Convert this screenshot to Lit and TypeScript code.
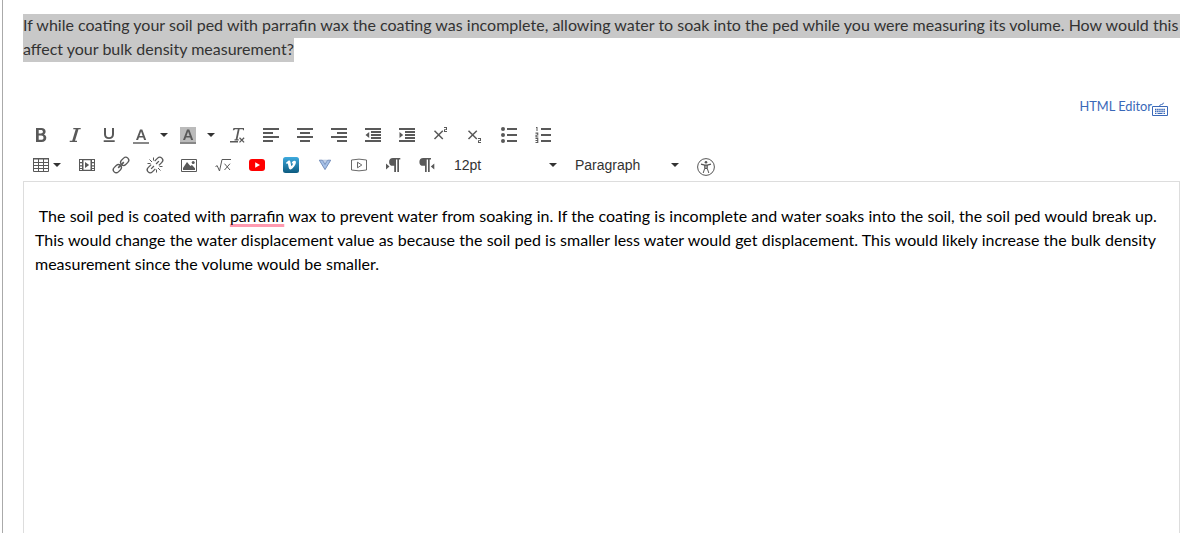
import { LitElement, html, css, svg, nothing } from "lit";
import type { TemplateResult, SVGTemplateResult } from "lit";
import { customElement, property } from "lit/decorators.js";

// All glyphs live on a 16x16 grid, painted with currentColor
const ICONS: Record<string, SVGTemplateResult> = {
    bold: svg`<path fill-rule="evenodd" d="M3 1h5.400c2.700 0 4.200 1.300 4.200 3.600 0 1.300-.6 2.300-1.700 2.900 1.500.5 2.400 1.700 2.400 3.300 0 2.600-1.700 4.200-4.700 4.200H3zM5.700 3.100v3.400h2.100c1.400 0 2.100-.6 2.100-1.700s-.7-1.700-2-1.700zM5.700 8.600v4.200h2.500c1.500 0 2.300-.7 2.300-2.100 0-1.400-.8-2.100-2.400-2.100z"/>`,
    italic: svg`<path d="M6.300 1h7.400v1.300h-2.200L8 13.700h2V15H2.700v-1.300h2.500L8.700 2.300H6.300z"/>`,
    underline: svg`<path d="M3 1h2v6.200c0 2 1 3 3 3s3-1 3-3V1h2v6.300c0 3-1.800 4.700-5 4.700s-5-1.700-5-4.700zM2.700 13.300h11V15h-11z"/>`,
    letterA: svg`<path fill-rule="evenodd" d="M7 2.500h2.300L13.200 13h-2.100l-.9-2.600H6L5.100 13H3zM8.100 4.500 6.500 9h3.200z"/>`,
    clear: svg`<path d="M4.500 1H15v2.200h-1l-.2-.9h-3.200L8.500 12.300h1.200v1.300H5.500v-1.300h1.200L8.800 2.300H6L5 3.300H3.800zM1 14h8v1.600H1z"/><path d="m10.500 10.800 4.600 4.600m0-4.600-4.600 4.600" fill="none" stroke="currentColor" stroke-width="1.300"/>`,
    left: svg`<path d="M0 1h16v2H0zm0 4h10v2H0zm0 4h16v2H0zm0 4h10v2H0z"/>`,
    center: svg`<path d="M0 1h16v2H0zm3 4h10v2H3zM0 9h16v2H0zm3 4h10v2H3z"/>`,
    right: svg`<path d="M0 1h16v2H0zm6 4h10v2H6zM0 9h16v2H0zm6 4h10v2H6z"/>`,
    outdent: svg`<path d="M0 1h16v2H0zm6 3h10v2H6zm0 3h10v2H6zm0 3h10v2H6zm-6 3h16v2H0zM4.200 5v6L.5 8z"/>`,
    indent: svg`<path d="M0 1h16v2H0zm6 3h10v2H6zm0 3h10v2H6zm0 3h10v2H6zm-6 3h16v2H0zM.5 5v6l3.700-3z"/>`,
    sup: svg`<path d="m1.500 3.700 8.300 8.300m0-8.300L1.500 12" fill="none" stroke="currentColor" stroke-width="1.500"/><path d="M11 0h3v3h-2v1h2v1h-3V2.200h2V1h-2z"/>`,
    sub: svg`<path d="m1.500 3.700 8.300 8.300m0-8.300L1.500 12" fill="none" stroke="currentColor" stroke-width="1.500"/><path d="M11 11h3v3h-2v1h2v1h-3v-2.800h2V12h-2z"/>`,
    bullets: svg`<path d="M6 1h10v2H6zm0 6h10v2H6zm0 6h10v2H6z"/><circle cx="2" cy="2" r="2"/><circle cx="2" cy="8" r="2"/><circle cx="2" cy="14" r="2"/>`,
    numbers: svg`<path d="M6 1h10v2H6zm0 6h10v2H6zm0 6h10v2H6zM1 0h1.500v4h-1V1H1zM.5 5.500h2.800v3h-1.700v1h1.700v1H.5V7.700h1.700v-1H.5zM.5 11h2.800v5H.5v-.9h1.700V14H.5v-1h1.700v-1H.5z"/>`,
    table: svg`<path fill="none" stroke="currentColor" d="M.5 1.500h15v13H.5zm0 4h15m-15 3h15m-15 3h15M5.500 2v12.500m5-12.500v12.500"/><path d="M0 1h16v1.500H0z"/>`,
    media: svg`<path fill-rule="evenodd" d="M0 2h16v12H0zm1 1v2h2V3zm12 0v2h2V3zM4.500 3.200v9.600h7V3.200zM1 6.200v2h2v-2zm12 0v2h2v-2zM1 9.400v1.500h2V9.400zm12 0v1.500h2V9.400zM1 12v1h2v-1zm12 0v1h2v-1zM6 5l4.200 3L6 11z"/>`,
    link: svg`<g fill="none" stroke="currentColor" stroke-width="1.300" transform="rotate(-45 8 8)"><rect x="-1.700" y="5" width="9" height="6" rx="3"/><rect x="8.700" y="5" width="9" height="6" rx="3"/><path stroke-width="1.600" d="M4 8h8"/></g>`,
    unlink: svg`<g fill="none" stroke="currentColor" stroke-width="1.300"><path transform="rotate(-45 8 8)" d="M5.500 5H1.300a3 3 0 0 0 0 6h4.200M10.500 5h4.200a3 3 0 0 1 0 6h-4.200M2.500 8h4M9.500 8h4"/><path stroke-width="1" d="M2.500 2.500 5 5M6.500.5v3M.5 6.500h3M11 11l2.500 2.500M9.500 12.500v3M12.500 9.500h3"/></g>`,
    image: svg`<path fill="none" stroke="currentColor" d="M.5 2.500h15v12H.5z"/><path d="M2 13V11l4-6 3.300 4L11 8l3 3.200V13z"/><circle cx="12.200" cy="5.600" r="1.500"/>`,
    math: svg`<path fill="none" stroke="currentColor" d="m.5 9.500 1.700-.8L4.500 14 7 2.500h9"/><path fill="none" stroke="currentColor" d="m9.500 6.700 5.500 6.300m0-6.300L9.500 13"/>`,
    youtube: svg`<rect y="2" width="16" height="12" rx="3" fill="#f00"/><path d="M6.200 5.200v5.600L11 8z" fill="#fff"/>`,
    vimeo: svg`<defs><linearGradient id="sky" x2="0" y2="1"><stop stop-color="#3eaade"/><stop offset="1" stop-color="#0d5b80"/></linearGradient></defs><rect width="16" height="16" rx="2.500" fill="url(#sky)"/><path fill="#fff" d="m3 5.700 2.300-1.900c1-.7 1.800-.3 2.100 1l.7 3.500c.3 1 .7.9 1.200 0 .7-1.200.9-2 .1-2.100l-.8.200c.5-1.800 1.500-2.800 3-2.700 1.300.1 1.600 1.200 1.100 2.800-.8 2.500-3.600 5.700-5 6-1.100.1-1.700-.7-2-2L5 7.300c-.2-.8-.5-.9-1.400-.3z"/>`,
    vee: svg`<path fill="#a6c1e8" stroke="#6b87b5" stroke-width=".9" d="M2.300 3.200h3.200L8 7.500l2.500-4.300h3.200L8 12.600z"/><path fill="#d3e0f3" stroke="#8fa8d0" stroke-width=".6" d="M6.200 3.200h3.600L8 6.300z"/>`,
    play: svg`<path fill="none" stroke="currentColor" stroke-width=".9" d="M.5 3Q8 1.300 15.500 3v10Q8 14.700.5 13zM6.500 5.200v5.600L10.800 8z"/>`,
    ltr: svg`<path d="M8 1h7.300v1.500h-1.300V15h-1.700V2.500h-1.300V15H9.200V8.800H8A3.900 3.900 0 0 1 8 1zM1 6.500v6l3.500-3z"/>`,
    rtl: svg`<path d="M4.300 1H12v1.500h-1.300V15H9V2.500H7.700V15H6V8.800H4.300a3.900 3.900 0 0 1 0-7.800zM15.300 6.500v6l-3.500-3z"/>`,
};

@customElement("tool-button")
export class ToolButton extends LitElement {
    @property()
    icon = "";

    @property({ type: Boolean })
    split = false;

    @property()
    swatch = "";

    render() {
        return html`<button class="tool ${this.split ? "split" : ""}">
            <span class="glyph ${this.swatch}">
                <svg viewBox="0 0 16 16" fill="currentColor">
                    ${ICONS[this.icon]}
                </svg>
            </span>
            ${this.split ? html`<i class="caret"></i>` : nothing}
        </button>`;
    }

    static styles = css`
        :host {
            display: block;
            flex: none;
        }

        .tool {
            display: flex;
            align-items: center;
            width: 34px;
            height: 30px;
            padding: 0 9px;
            border: 0;
            background: none;
            color: #595959;
        }

        .tool.split {
            width: 47px;
            padding: 0 5px 0 7px;
            justify-content: space-between;
        }

        :host([icon="table"]) .tool.split {
            width: 46px;
            padding: 0 9px;
        }

        .glyph {
            flex: none;
            width: 16px;
            height: 16px;
        }

        .glyph.fore,
        .glyph.back {
            height: 15px;
            border-bottom: 2px solid #888;
        }

        .glyph.back {
            background: #bbb;
        }

        svg {
            display: block;
            width: 16px;
            height: 16px;
            overflow: visible;
        }

        .caret {
            border: 4px solid transparent;
            border-top-color: #333;
            border-bottom: 0;
        }
    `;
}

@customElement("app-root")
export class AppRoot extends LitElement {
    tools(names: string[]): TemplateResult[] {
        return names.map(
            (name) => html`<tool-button icon=${name}></tool-button>`,
        );
    }

    render() {
        return html`<main class="page">
            <div class="question">
                <span class="marked"
                    >If while coating your soil ped with parrafin wax the
                    coating was incomplete, allowing water to soak into the ped
                    while you were measuring its volume. How would this</span
                >
                <span class="marked"
                    >affect your bulk density measurement?</span
                >
            </div>
            <div class="switch">
                <a class="link">HTML Editor</a>
                <svg class="keyboard" viewBox="0 0 16 14" fill="none" stroke="currentColor">
                    <path d="M.5 4.500h15v9H.5zM7.500 4.200Q8 2.300 9.500 2.500T11.500.7" />
                    <path
                        d="M3 7.500h10M3 9.500h10"
                        stroke-width="1.300"
                        stroke-dasharray="1.500 .6"
                    />
                    <path d="M3 11.500h1.500m1 0h5m1 0H13" />
                </svg>
            </div>
            <div class="toolbar">
                <div class="row">
                    ${this.tools(["bold", "italic", "underline"])}
                    <tool-button icon="letterA" swatch="fore" split></tool-button>
                    <tool-button icon="letterA" swatch="back" split></tool-button>
                    ${this.tools([
                        "clear",
                        "left",
                        "center",
                        "right",
                        "outdent",
                        "indent",
                        "sup",
                        "sub",
                        "bullets",
                        "numbers",
                    ])}
                </div>
                <div class="row">
                    <tool-button icon="table" split></tool-button>
                    ${this.tools([
                        "media",
                        "link",
                        "unlink",
                        "image",
                        "math",
                        "youtube",
                        "vimeo",
                        "vee",
                        "play",
                        "ltr",
                        "rtl",
                    ])}
                    <div class="select size">12pt<i class="caret"></i></div>
                    <div class="select block">Paragraph<i class="caret"></i></div>
                    <svg class="a11y" viewBox="0 0 18 18" fill="none" stroke="#555">
                        <circle cx="9" cy="9" r="8.400" />
                        <circle cx="9" cy="4.200" r="1.300" fill="#555" stroke="none" />
                        <path d="M4 6.200 7.700 7.200h2.600l3.700-1" stroke-width="1.200" />
                        <path d="M7.700 7v3.500L6.200 15M10.300 7v3.500l1.500 4.500M7.700 10.500h2.600M9 7v3.500" />
                    </svg>
                </div>
            </div>
            <div class="editor">
                <p class="answer">
                    &nbsp;The soil ped is coated with
                    <span class="typo">parrafin</span> wax to prevent water from
                    soaking in. If the coating is incomplete and water soaks
                    into the soil, the soil ped would break up. This would
                    change the water displacement value as because the soil ped
                    is smaller less water would get displacement. This would
                    likely increase the bulk density measurement since the
                    volume would be smaller.
                </p>
            </div>
        </main>`;
    }

    static styles = css`
        :host {
            display: block;
            height: 533px;
            overflow: hidden;
            background: #fff;
            font: 16px/24px Lato, "Liberation Sans", sans-serif;
            color: #2d3b45;
        }

        * {
            box-sizing: border-box;
        }

        .page {
            display: flex;
            flex-direction: column;
            height: 533px;
            margin-left: 2px;
            padding: 14px 10px 0 20px;
            border-left: 1px solid #aaa;
        }

        .question {
            display: flex;
            flex-direction: column;
            align-items: flex-start;
            margin-right: -2px;
        }

        .marked {
            display: block;
            height: 24px;
            line-height: 22px;
            white-space: nowrap;
            word-spacing: 0.04px;
            background: #c8c8c8;
            color: #333;
        }

        .marked:first-child {
            width: 1157px;
        }

        .switch {
            display: flex;
            justify-content: flex-end;
            height: 24px;
            margin: 33px 12px 0 0;
            color: #3a68b8;
            font-size: 12.8px;
            line-height: 22px;
        }

        .keyboard {
            width: 16px;
            height: 14px;
            margin-top: 7px;
        }

        .toolbar {
            height: 62px;
            padding: 1px 0 0 1px;
        }

        .row {
            display: flex;
            height: 30px;
        }

        .select {
            display: flex;
            align-items: center;
            justify-content: space-between;
            height: 30px;
            font: 14px/20px "Liberation Sans", sans-serif;
            color: #333;
        }

        .size {
            width: 121px;
            padding: 0 8px 0 10px;
        }

        .block {
            width: 122px;
            padding: 0 8px 0 10px;
        }

        .caret {
            border: 4px solid transparent;
            border-top-color: #333;
            border-bottom: 0;
        }

        .a11y {
            width: 18px;
            height: 18px;
            margin: 8px 0 0 10px;
        }

        .editor {
            flex: 1;
            width: 1157px;
            padding: 22px 11px 0;
            border: 1px solid #ddd;
            border-bottom: 0;
        }

        .answer {
            margin: 0;
            color: #000;
            word-spacing: 0.14px;
        }

        .typo {
            text-decoration: underline 3px #ff9ab0;
            text-underline-offset: 2px;
            text-decoration-skip-ink: none;
        }
    `;
}
